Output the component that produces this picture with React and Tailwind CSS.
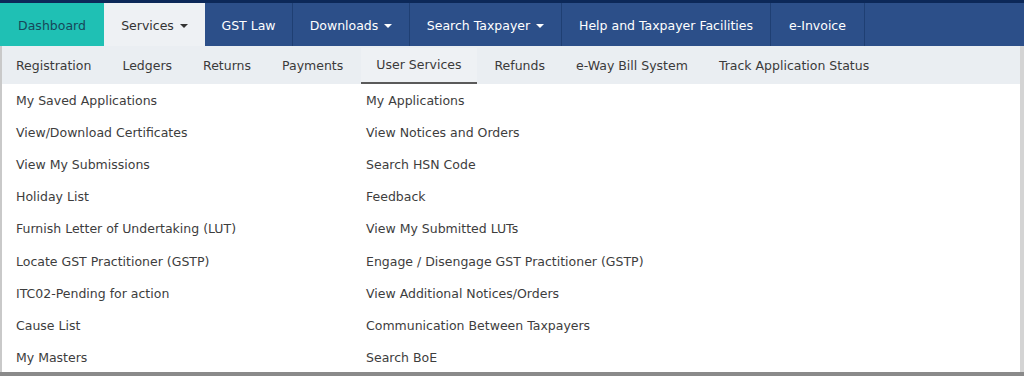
import React from "react";

const topTabs = [
	{ label: "Dashboard", w: "w-[104px]", cls: "bg-[#1fc0b4] text-[#17475a]" },
	{ label: "Services", w: "w-[101px]", cls: "bg-[#eef1f4] text-[#333]", caret: true },
	{ label: "GST Law", w: "w-[88px]", cls: "text-white border-r border-[#1f3f73]" },
	{ label: "Downloads", w: "w-[117px]", cls: "text-white border-r border-[#1f3f73]", caret: true },
	{ label: "Search Taxpayer", w: "w-[152px]", cls: "text-white border-r border-[#1f3f73]", caret: true },
	{ label: "Help and Taxpayer Facilities", w: "w-[209px]", cls: "text-white border-r border-[#1f3f73]" },
	{ label: "e-Invoice", w: "w-[94px]", cls: "text-white border-r border-[#1f3f73]" },
];

const subTabs = ["Registration", "Ledgers", "Returns", "Payments", "User Services", "Refunds", "e-Way Bill System", "Track Application Status"];

const leftCol = [
	"My Saved Applications",
	"View/Download Certificates",
	"View My Submissions",
	"Holiday List",
	"Furnish Letter of Undertaking (LUT)",
	"Locate GST Practitioner (GSTP)",
	"ITC02-Pending for action",
	"Cause List",
	"My Masters",
];

const rightCol = [
	"My Applications",
	"View Notices and Orders",
	"Search HSN Code",
	"Feedback",
	"View My Submitted LUTs",
	"Engage / Disengage GST Practitioner (GSTP)",
	"View Additional Notices/Orders",
	"Communication Between Taxpayers",
	"Search BoE",
];

function Caret({ light }) {
	return (
		<span
			className={
				"ml-[6px] inline-block w-0 h-0 border-l-[4px] border-r-[4px] border-t-[4px] border-l-transparent border-r-transparent " +
				(light ? "border-t-white" : "border-t-[#333]")
			}
		/>
	);
}

export default function App() {
	return (
		<div className="w-[1024px] h-[376px] overflow-hidden bg-[#8a8a8a] text-[12.5px]" style={{ fontFamily: '"DejaVu Sans", Verdana, sans-serif' }}>
			<div className="h-[3px] bg-[#0c2858]" />
			<div className="flex h-[43px] bg-[#2c4f89]">
				{topTabs.map((t) => (
					<div key={t.label} className={"flex items-center justify-center shrink-0 pt-[3px] " + t.w + " " + t.cls}>
						{t.label}
						{t.caret && <Caret light={t.label !== "Services"} />}
					</div>
				))}
			</div>
			<div className="flex w-[1024px]">
				<div className="w-[1020px] border-l-2 border-[#c9c9c9]">
					<div className="flex h-[38px] pt-[2px] bg-[#eaeef2] text-[#3a3a3a]">
						{subTabs.map((s) => (
							<div
								key={s}
								className={
									"flex items-center px-[15.5px] first:pl-[14px] " +
									(s === "User Services" ? "border-b-2 border-[#5a5a5a] bg-[#eef1f4] px-[13px] mx-[2px]" : "")
								}
							>
								{s}
							</div>
						))}
					</div>
					<div className="flex h-[288px] pt-[1px] bg-white text-[#3d3d3d]">
						<div className="w-[364px] pl-[14px]">
							{leftCol.map((i) => (
								<div key={i} className="h-[32.2px] flex items-center">
									{i}
								</div>
							))}
						</div>
						<div className="flex-1">
							{rightCol.map((i) => (
								<div key={i} className="h-[32.2px] flex items-center">
									{i}
								</div>
							))}
						</div>
					</div>
				</div>
				<div className="w-[4px] h-[326px] bg-[#d4d4d4]" />
			</div>
		</div>
	);
}
